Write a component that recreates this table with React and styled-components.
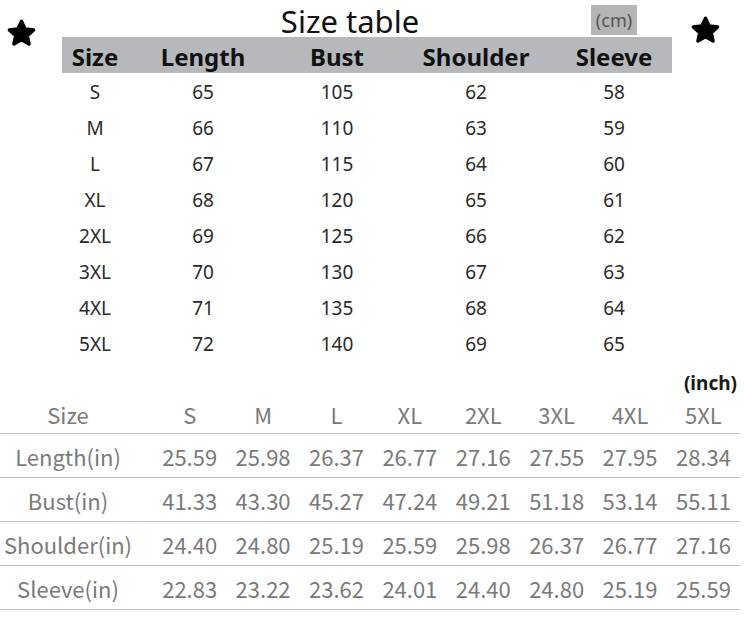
import styled, { createGlobalStyle } from 'styled-components';

const GlobalStyle = createGlobalStyle`
  html, body {
    margin: 0;
    padding: 0;
    background: #ffffff;
  }
  body {
    font-family: 'Noto Sans', 'Liberation Sans', sans-serif;
  }
`;

const Page = styled.div`
  width: 744px;
  height: 637px;
  background: #fff;
  overflow: hidden;
`;

const TopSection = styled.div`
  display: flex;
  align-items: flex-start;
`;

const StarCell = styled.div`
  width: ${p => p.$width}px;
  padding-left: ${p => p.$left}px;
  padding-top: ${p => p.$top}px;
  box-sizing: border-box;
  flex-shrink: 0;
  line-height: 0;
`;

const CmColumn = styled.div`
  width: 610px;
  flex-shrink: 0;
`;

const TitleRow = styled.div`
  display: grid;
  grid-template-columns: 176px 224px 129px 46px 1fr;
  height: 37px;
  align-items: start;
`;

const Title = styled.div`
  grid-column: 2;
  text-align: center;
  font-size: 31px;
  color: #111;
  margin-top: 5.5px;
  height: 31px;
  line-height: 31px;
`;

const UnitTag = styled.div`
  grid-column: 4;
  height: 30px;
  margin-top: 5px;
  background: #b4b5b7;
  color: #555;
  font-size: 18px;
  display: flex;
  align-items: center;
  justify-content: center;
`;

const CmGrid = styled.div`
  display: grid;
  grid-template-columns: 66px 150px 118px 160px 116px;
`;

const CmHeader = styled(CmGrid)`
  background: #b6b8bb;
  height: 36px;
  align-items: center;
`;

const CmHeadCell = styled.div`
  text-align: center;
  font-weight: 700;
  font-size: 24px;
  color: #111;
  line-height: 1;
  padding-top: 4px;
`;

const CmRow = styled(CmGrid)`
  height: 36px;
  align-items: center;
`;

const CmCell = styled.div`
  text-align: center;
  font-size: 19px;
  color: #2a2a2a;
  line-height: 1;
  padding-top: 3px;
`;

const InchSection = styled.div`
  margin-top: 10px;
`;

const InchNote = styled.div`
  text-align: right;
  padding-right: 7px;
  font-size: 19px;
  font-weight: 700;
  color: #1a1a1a;
  height: 24px;
  line-height: 24px;
`;

const InchRow = styled.div`
  display: grid;
  grid-template-columns: 153px repeat(8, 73.4px);
  width: 740px;
  height: ${p => p.$height}px;
  align-items: center;
  border-bottom: 1px solid #c4c4c4;
  font-family: 'Noto Sans CJK SC', 'Noto Sans', sans-serif;
  font-size: 22px;
  color: #7a7a7a;
`;

const InchLabel = styled.div`
  text-align: center;
  padding-right: 17px;
  white-space: nowrap;
  line-height: 1;
`;

const InchCell = styled.div`
  text-align: center;
  line-height: 1;
`;

const Star = () => (
  <svg width="31" height="29" viewBox="0 0 30 28">
    <polygon
      points="15,3 18.6,10.6 26.8,11.5 20.7,17.1 22.4,25.2 15,21.1 7.6,25.2 9.3,17.1 3.2,11.5 11.4,10.6"
      fill="#000"
      stroke="#000"
      strokeWidth="3.2"
      strokeLinejoin="round"
    />
  </svg>
);

const cmHead = ['Size', 'Length', 'Bust', 'Shoulder', 'Sleeve'];
const cmRows = [
  ['S', 65, 105, 62, 58],
  ['M', 66, 110, 63, 59],
  ['L', 67, 115, 64, 60],
  ['XL', 68, 120, 65, 61],
  ['2XL', 69, 125, 66, 62],
  ['3XL', 70, 130, 67, 63],
  ['4XL', 71, 135, 68, 64],
  ['5XL', 72, 140, 69, 65],
];

const inchHead = ['S', 'M', 'L', 'XL', '2XL', '3XL', '4XL', '5XL'];
const inchRows = [
  ['Length(in)', '25.59', '25.98', '26.37', '26.77', '27.16', '27.55', '27.95', '28.34'],
  ['Bust(in)', '41.33', '43.30', '45.27', '47.24', '49.21', '51.18', '53.14', '55.11'],
  ['Shoulder(in)', '24.40', '24.80', '25.19', '25.59', '25.98', '26.37', '26.77', '27.16'],
  ['Sleeve(in)', '22.83', '23.22', '23.62', '24.01', '24.40', '24.80', '25.19', '25.59'],
];

export default function App() {
  return (
    <Page>
      <GlobalStyle />
      <TopSection>
        <StarCell $width={62} $left={6} $top={18}>
          <Star />
        </StarCell>
        <CmColumn>
          <TitleRow>
            <Title>Size table</Title>
            <UnitTag>(cm)</UnitTag>
          </TitleRow>
          <CmHeader>
            {cmHead.map(h => (
              <CmHeadCell key={h}>{h}</CmHeadCell>
            ))}
          </CmHeader>
          {cmRows.map(r => (
            <CmRow key={r[0]}>
              {r.map((v, i) => (
                <CmCell key={i}>{v}</CmCell>
              ))}
            </CmRow>
          ))}
        </CmColumn>
        <StarCell $width={72} $left={18} $top={15}>
          <Star />
        </StarCell>
      </TopSection>

      <InchSection>
        <InchNote>(inch)</InchNote>
        <InchRow $height={38}>
          <InchLabel>Size</InchLabel>
          {inchHead.map(h => (
            <InchCell key={h}>{h}</InchCell>
          ))}
        </InchRow>
        {inchRows.map(r => (
          <InchRow key={r[0]} $height={43}>
            <InchLabel>{r[0]}</InchLabel>
            {r.slice(1).map((v, i) => (
              <InchCell key={i}>{v}</InchCell>
            ))}
          </InchRow>
        ))}
      </InchSection>
    </Page>
  );
}
